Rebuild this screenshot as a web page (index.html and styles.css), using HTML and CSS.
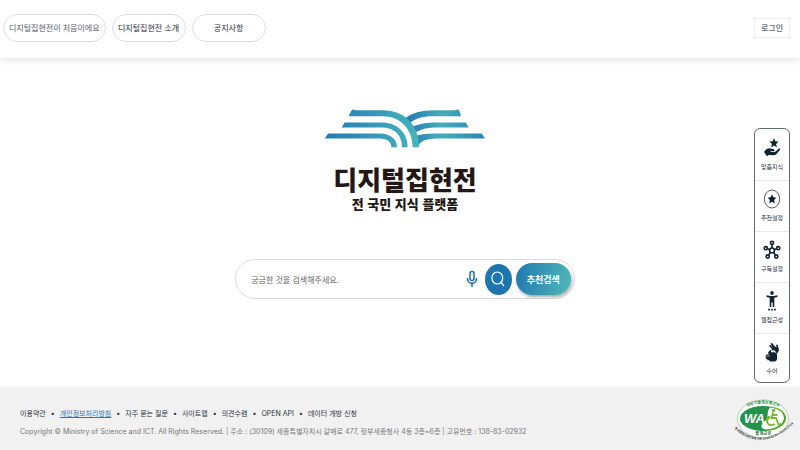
FILE: index.html
```html
<!DOCTYPE html>
<html lang="ko">
<head>
    <meta charset="UTF-8">
    <meta name="viewport" content="width=device-width, initial-scale=1.0">
    <title>디지털집현전</title>
    <link rel="stylesheet" href="styles.css">
</head>
<body>

<header class="header">
    <nav class="top-nav">
        <a href="#" class="pill light">디지털집현전이 처음이에요</a>
        <a href="#" class="pill">디지털집현전 소개</a>
        <a href="#" class="pill">공지사항</a>
    </nav>
    <a href="#" class="login">로그인</a>
</header>

<main class="main">
    <svg class="logo" viewBox="30 26 480 116" aria-hidden="true">
        <defs>
            <linearGradient id="leftWing" gradientUnits="userSpaceOnUse" x1="30" y1="0" x2="312" y2="0">
                <stop offset="0" stop-color="#2478b2"/>
                <stop offset="1" stop-color="#45b5bd"/>
            </linearGradient>
            <linearGradient id="rightWing" gradientUnits="userSpaceOnUse" x1="272" y1="0" x2="510" y2="0">
                <stop offset="0" stop-color="#2478b2"/>
                <stop offset="0.45" stop-color="#43aebb"/>
                <stop offset="1" stop-color="#2b83b5"/>
            </linearGradient>
        </defs>
        <g fill="url(#rightWing)">
            <path d="M438 47L434 32Q432 26 426 27L420 29H355C320 29 290 37 271 53L286 66C305 51 328 47 355 47Z"/>
            <path d="M461 81L452 66H370C335 66 310 70 293 79L301 97C320 84 340 81 370 81Z"/>
            <path d="M510 114L500 99H370C340 99 318 101 304 106L310 140C313 120 335 114 375 114Z"/>
        </g>
        <g fill="url(#leftWing)">
            <path d="M101 47L108 32Q110 26 116 27L122 29H205C265 29 312 70 312 140H293C293 85 255 47 205 47Z"/>
            <path d="M80 81L89 66H200C245 66 278 95 278 140H261C261 105 240 81 200 81Z"/>
            <path d="M30 114L39 99H195C225 99 246 115 246 140H229C229 125 218 114 195 114Z"/>
        </g>
    </svg>
    <h1 class="title">디지털집현전</h1>
    <p class="subtitle">전 국민 지식 플랫폼</p>

    <form class="search">
        <input type="text" class="search-input" placeholder="궁금한 것을 검색해주세요." aria-label="검색어">
        <button type="button" class="mic" aria-label="음성 검색">
            <svg viewBox="0 0 12 18" fill="none" stroke="#1c6fa8" stroke-width="1.5">
                <rect x="4" y="1.5" width="4" height="9" rx="2"/>
                <path d="M1.5 8C1.5 15 10.5 15 10.5 8M6 13.5V17"/>
            </svg>
        </button>
        <button type="submit" class="find" aria-label="검색">
            <svg viewBox="0 0 14 16" fill="none" stroke="#fff" stroke-width="1.2">
                <ellipse cx="6.3" cy="7" rx="5.4" ry="6"/>
                <path d="M10 11.4L13 15"/>
            </svg>
        </button>
        <button type="button" class="recommend">추천검색</button>
    </form>
</main>

<aside class="quick">
    <a href="#" class="quick-item">
        <svg viewBox="0 0 18 20" fill="#10242f">
            <path d="M11 0L12.3 3.3L15.5 3.6L13.1 6L13.9 9.5L11 7.6L8.1 9.5L8.9 6L6.5 3.6L9.7 3.3Z"/>
            <path d="M2.5 12Q5 9.5 7.5 10.5L11 11.3Q12.3 12.3 11 13.3H7.5V14H12L16 10.5Q17.7 10 17.2 11.8L13 16.5Q12 17.3 10 17.2L5.5 17L4 18.2L1 14Z"/>
        </svg>
        <span>맞춤지식</span>
    </a>
    <a href="#" class="quick-item">
        <svg viewBox="0 0 18 20">
            <ellipse cx="9" cy="10" rx="7.7" ry="9" fill="none" stroke="#253a44" stroke-width="0.8"/>
            <path d="M9 5.3L10.4 8.3L13.3 8.7L11.2 11L11.7 14.5L9 12.7L6.3 14.5L6.8 11L4.7 8.7L7.6 8.3Z" fill="#10242f"/>
        </svg>
        <span>추천설정</span>
    </a>
    <a href="#" class="quick-item">
        <svg viewBox="0 0 18 20" fill="none" stroke="#10242f" stroke-width="1.6">
            <path d="M9 4.5V8M4.3 8.7L6.7 9.8M13.7 8.7L11.3 9.8M7.5 12.5L5.5 15M10.5 12.5L12.5 15"/>
            <circle cx="9" cy="10.4" r="2.4"/>
            <circle cx="9" cy="2.8" r="1.6"/>
            <circle cx="2.8" cy="8.2" r="1.6"/>
            <circle cx="15.2" cy="8.2" r="1.6"/>
            <circle cx="4.7" cy="16.5" r="1.6"/>
            <circle cx="13.3" cy="16.5" r="1.6"/>
        </svg>
        <span>구독설정</span>
    </a>
    <a href="#" class="quick-item">
        <svg viewBox="0 0 18 20" fill="#10242f">
            <ellipse cx="9" cy="2" rx="1.7" ry="1.9"/>
            <path d="M3.5 4.3L7.5 5H10.5L14.5 4.3V6L11.3 6.7V16H9.7V11.5H8.3V16H6.7V6.7L3.5 6Z"/>
            <path d="M5.3 17.8H7V19.5H5.3ZM8.2 17.8H9.9V19.5H8.2ZM11.1 17.8H12.8V19.5H11.1Z"/>
        </svg>
        <span>웹접근성</span>
    </a>
    <a href="#" class="quick-item">
        <svg viewBox="0 0 18 20" fill="#10242f">
            <path d="M6 3.5L7.2 2.7L9.5 5.5L7.5 1.5L9 1L12 4.5L13.5 5.5L13.2 2.5L14.8 3L16 8.5L13.8 12L12 8.5L8 8.3L9 7.2Z"/>
            <path d="M4.8 11L7.3 7.8L8.3 8.8L7.8 10.3H12L14 12V18L12 19.5H7L6.2 18.3H4.3V17H3.2V15.6H2.5V14.2H7V13.7H2.8V12.4H5.8V11.7Z"/>
        </svg>
        <span>수어</span>
    </a>
</aside>

<footer class="footer">
    <div>
        <ul class="footer-links">
            <li><a href="#">이용약관</a></li>
            <li><a href="#" class="privacy">개인정보처리방침</a></li>
            <li><a href="#">자주 묻는 질문</a></li>
            <li><a href="#">사이트맵</a></li>
            <li><a href="#">의견수렴</a></li>
            <li><a href="#">OPEN API</a></li>
            <li><a href="#">데이터 개방 신청</a></li>
        </ul>
        <p class="copyright">Copyright © Ministry of Science and ICT. All Rights Reserved. | 주소 : (30109) 세종특별자치시 갈매로 477, 정부세종청사 4동 3층~6층 | 고유번호 : 138-83-02932</p>
    </div>
    <svg class="wa-mark" viewBox="0 0 56 46" role="img" aria-label="웹 접근성 인증마크">
        <defs>
            <path id="arcTop" d="M8 10Q28 -1 48 10"/>
            <path id="arcBottom" d="M0 30Q27 54 58 25"/>
        </defs>
        <ellipse cx="28" cy="20" rx="25.5" ry="19" fill="#fff" stroke="#8fc47f" stroke-width="0.7"/>
        <text class="wa-arc green"><textPath href="#arcTop" startOffset="50%" text-anchor="middle">과학기술정보통신부</textPath></text>
        <ellipse cx="28" cy="19.5" rx="23" ry="12.5" fill="#23924a"/>
        <path d="M31 30.5C24 30 26 24 31 21C34 18 31 10 36 8.5Q49 11 49 19.5Q47 29 31 30.5Z" fill="#fff"/>
        <path d="M36 8Q50 10 50.5 19.5Q49 30 31 31.5" fill="none" stroke="#76b82a" stroke-width="1.2"/>
        <text x="9" y="24" class="wa-text">WA</text>
        <g fill="none" stroke="#76b82a" stroke-width="1.8">
            <circle cx="38.5" cy="11.5" r="1.7" fill="#76b82a" stroke="none"/>
            <path d="M38 13.5L36.5 19H41L43.5 25.5L46 25M34 17L31.5 21M38 16L42.5 16"/>
            <path d="M35 18C29 22 33 28.5 40 25"/>
        </g>
        <text x="28" y="36" text-anchor="middle" class="wa-label">웹 접근성</text>
        <text class="wa-arc outer"><textPath href="#arcBottom" startOffset="50%" text-anchor="middle">한국웹접근성인증평가원 2023.07.25~2024.07.24</textPath></text>
    </svg>
</footer>

</body>
</html>
```
FILE: styles.css
```css
* {
    box-sizing: border-box;
}
body {
    font-family: "Noto Sans CJK KR", sans-serif;
    font-size: 8px;
    line-height: 12px;
    margin: 0;
    min-height: 100vh;
    display: flex;
    flex-direction: column;
    position: relative;
    background: #fff;
    color: #26323a;
}
a {
    color: inherit;
    text-decoration: none;
}
button {
    font-family: inherit;
    padding: 0;
    border: none;
    background: none;
    cursor: pointer;
}
.header {
    display: flex;
    align-items: center;
    justify-content: space-between;
    height: 58px;
    padding: 0 10px 3px 3px;
    box-shadow: 0 2px 8px rgba(0, 0, 0, 0.12);
}
.top-nav {
    display: flex;
    gap: 6px;
}
.pill {
    min-width: 74px;
    padding: 7px 5px;
    border: 1px solid #dedede;
    border-radius: 14px;
    text-align: center;
}
.pill.light {
    color: #56616a;
}
.login {
    padding: 3px 6px;
    border: 1px solid #ececec;
}
.main {
    flex: 1;
    display: flex;
    flex-direction: column;
    align-items: center;
    padding: 51px 0 0 10px;
}
.logo {
    width: 160px;
    height: 39px;
}
.title {
    margin: 14px 0 0;
    font-size: 26px;
    line-height: 34px;
    font-weight: 900;
    color: #231815;
}
.subtitle {
    margin: 0;
    font-size: 13px;
    line-height: 16px;
    font-weight: 900;
    color: #231815;
}
.search {
    display: flex;
    align-items: center;
    width: 43%;
    min-width: 300px;
    height: 40px;
    margin-top: 47px;
    padding: 0 3px 0 15px;
    border: 1px solid #dcdcdc;
    border-radius: 20px;
}
.search-input {
    flex: 1;
    min-width: 0;
    padding: 0;
    border: none;
    outline: none;
    background: none;
    font-family: inherit;
    font-size: 8px;
}
.search-input::placeholder {
    color: #666;
}
.mic {
    width: 12px;
    height: 18px;
    margin-right: 7px;
}
.mic svg {
    display: block;
}
.find {
    display: flex;
    align-items: center;
    justify-content: center;
    width: 27px;
    height: 31px;
    margin-right: 4px;
    border-radius: 50%;
    background: #1e76b0;
}
.find svg {
    width: 14px;
    height: 16px;
}
.recommend {
    width: 55px;
    height: 32px;
    border-radius: 16px;
    background: linear-gradient(100deg, #2079b1, #50b8b9);
    box-shadow: 1px 2px 3px rgba(0, 0, 0, 0.35);
    color: #fff;
    font-size: 9px;
    font-weight: 700;
}
/* floating quick menu */
.quick {
    position: absolute;
    top: 128px;
    right: 10px;
    width: 36px;
    border: 1px solid #5d6b75;
    border-radius: 6px;
    background: #fff;
    overflow: hidden;
}
.quick-item {
    display: flex;
    flex-direction: column;
    align-items: center;
    gap: 3px;
    height: 51px;
    padding-top: 9px;
    font-size: 6px;
}
.quick-item + .quick-item {
    border-top: 1px solid #e8e8e8;
    padding-top: 8px;
}
.quick-item:last-child {
    height: 49px;
}
.quick-item svg {
    width: 18px;
    height: 20px;
}
.footer {
    display: flex;
    justify-content: space-between;
    align-items: flex-start;
    padding: 12px 9px 5px 20px;
    background: #f1f1f1;
    font-family: Inter, "Noto Sans CJK KR", sans-serif;
    font-size: 7px;
}
.footer-links {
    display: flex;
    margin: 9px 0 6px;
    padding: 0;
    list-style: none;
}
.footer-links li + li::before {
    content: "•";
    display: inline-block;
    width: 14px;
    text-align: center;
}
.privacy {
    color: #2a75b8;
    text-decoration: underline;
}
.copyright {
    margin: 0;
    color: #777;
}
.wa-mark {
    flex: none;
    width: 56px;
    height: 46px;
    overflow: visible;
}
.wa-arc {
    font-size: 4px;
    font-weight: 700;
    fill: #333;
}
.wa-arc.green {
    fill: #23924a;
}
.wa-arc.outer {
    font-size: 3px;
}
.wa-text {
    font-family: "Liberation Sans", sans-serif;
    font-size: 13px;
    font-style: italic;
    font-weight: 700;
    fill: #fff;
}
.wa-label {
    font-size: 4px;
    font-weight: 700;
    fill: #1d6b3a;
}
```
